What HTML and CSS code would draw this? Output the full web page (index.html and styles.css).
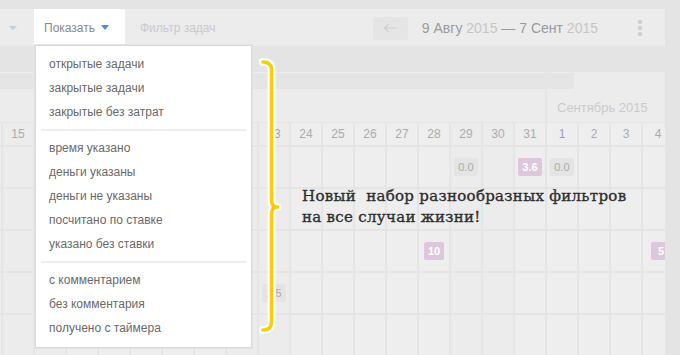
FILE: index.html
```html
<!DOCTYPE html>
<html lang="ru">
<head>
<meta charset="utf-8">
<title>Календарь</title>
<link rel="stylesheet" href="styles.css">
</head>
<body>
<div class="app">
  <div class="main">
    <div class="toolbar">
      <div class="tb-left"><span class="tri tri-light"></span></div>
      <div class="tab tab-active">Показать <span class="tri tri-blue"></span></div>
      <div class="filter">Фильтр задач</div>
      <button class="nav-btn" type="button">
        <svg width="14" height="10" viewBox="0 0 14 10"><path d="M13.5 5H1.5M5.5 1L1.5 5l4 4" fill="none" stroke="#cfcfcf" stroke-width="1.2"/></svg>
      </button>
      <div class="range"><span class="d">9 Авгу</span> <span class="y">2015</span> <span class="d">— 7 Сент</span> <span class="y">2015</span></div>
      <div class="more"><i></i><i></i><i></i></div>
    </div>
    <div class="band"></div>
    <div class="months">
      <div class="month month-aug"><div class="bar"></div></div>
      <div class="month month-sep"><div class="bar bar-short"></div><div class="mname">Сентябрь 2015</div></div>
    </div>
    <div class="grid">
      <div class="c"></div><div class="c">15</div><div class="c">16</div><div class="c">17</div><div class="c">18</div><div class="c">19</div><div class="c">20</div><div class="c">21</div><div class="c">22</div><div class="c">23</div><div class="c">24</div><div class="c">25</div><div class="c">26</div><div class="c">27</div><div class="c">28</div><div class="c">29</div><div class="c">30</div><div class="c">31</div><div class="c c-first">1</div><div class="c">2</div><div class="c">3</div><div class="c">4</div>

      <div class="c"></div><div class="c"></div><div class="c"></div><div class="c"></div><div class="c"></div><div class="c"></div><div class="c"></div><div class="c"></div><div class="c"></div><div class="c"></div><div class="c"></div><div class="c"></div><div class="c"></div><div class="c"></div><div class="c"></div><div class="c"><span class="badge">0.0</span></div><div class="c"></div><div class="c"><span class="badge badge-pink">3.6</span></div><div class="c"><span class="badge">0.0</span></div><div class="c"></div><div class="c"></div><div class="c"></div>

      <div class="c"></div><div class="c"></div><div class="c"></div><div class="c"></div><div class="c"></div><div class="c"></div><div class="c"></div><div class="c"></div><div class="c"></div><div class="c"></div><div class="c"></div><div class="c"></div><div class="c"></div><div class="c"></div><div class="c"></div><div class="c"></div><div class="c"></div><div class="c"></div><div class="c"></div><div class="c"></div><div class="c"></div><div class="c"></div>

      <div class="c"></div><div class="c"></div><div class="c"></div><div class="c"></div><div class="c"></div><div class="c"></div><div class="c"></div><div class="c"></div><div class="c"></div><div class="c"></div><div class="c"></div><div class="c"></div><div class="c"></div><div class="c"></div><div class="c"><span class="badge badge-pink">10</span></div><div class="c"></div><div class="c"></div><div class="c"></div><div class="c"></div><div class="c"></div><div class="c"></div><div class="c c-edge"><span class="badge badge-pink">5</span></div>

      <div class="c"></div><div class="c"></div><div class="c"></div><div class="c"></div><div class="c"></div><div class="c"></div><div class="c"></div><div class="c"></div><div class="c"></div><div class="c"><span class="badge badge-wide">1.5</span></div><div class="c"></div><div class="c"></div><div class="c"></div><div class="c"></div><div class="c"></div><div class="c"></div><div class="c"></div><div class="c"></div><div class="c"></div><div class="c"></div><div class="c"></div><div class="c"></div>

      <div class="c"></div><div class="c"></div><div class="c"></div><div class="c"></div><div class="c"></div><div class="c"></div><div class="c"></div><div class="c"></div><div class="c"></div><div class="c"></div><div class="c"></div><div class="c"></div><div class="c"></div><div class="c"></div><div class="c"></div><div class="c"></div><div class="c"></div><div class="c"></div><div class="c"></div><div class="c"></div><div class="c"></div><div class="c"></div>
    </div>
  </div>
  <div class="side"></div>
</div>

<div class="menu">
  <div class="item">открытые задачи</div>
  <div class="item">закрытые задачи</div>
  <div class="item">закрытые без затрат</div>
  <div class="sep"></div>
  <div class="item">время указано</div>
  <div class="item">деньги указаны</div>
  <div class="item">деньги не указаны</div>
  <div class="item">посчитано по ставке</div>
  <div class="item">указано без ставки</div>
  <div class="sep"></div>
  <div class="item">с комментарием</div>
  <div class="item">без комментария</div>
  <div class="item">получено с таймера</div>
</div>

<svg class="brace" viewBox="0 0 680 355" width="680" height="355">
  <path d="M263,62 Q271.5,62 271.5,70 L271.5,200 Q271.5,207 277.5,207 Q271.5,207 271.5,214 L271.5,322 Q271.5,330 263,330" fill="none" stroke="#ffffff" stroke-width="8" stroke-linecap="round" stroke-linejoin="round"/>
  <path d="M263,62 Q271.5,62 271.5,70 L271.5,200 Q271.5,207 277.5,207 Q271.5,207 271.5,214 L271.5,322 Q271.5,330 263,330" fill="none" stroke="#ffcc00" stroke-width="3.5" stroke-linecap="round" stroke-linejoin="round"/>
</svg>

<div class="note">Новый&nbsp; набор разнообразных фильтров<br>на все случаи жизни!</div>
</body>
</html>
```

FILE: styles.css
```css
* { box-sizing: border-box; }

html, body {
  margin: 0;
  padding: 0;
}

body {
  width: 680px;
  height: 355px;
  overflow: hidden;
  position: relative;
  background: #e4e4e4;
  font-family: "Liberation Sans", Arial, sans-serif;
}

.app {
  display: flex;
  height: 355px;
}

.main {
  width: 665px;
  padding-top: 9px;
  overflow: hidden;
}

.side {
  flex: 1;
  background: #e4e4e4;
}

/* toolbar */
.toolbar {
  height: 37px;
  background: #ececec;
  display: flex;
  align-items: center;
}

.tb-left {
  width: 34px;
  height: 100%;
  display: flex;
  align-items: center;
  padding-left: 9px;
}

.tri {
  display: inline-block;
  width: 0;
  height: 0;
  border-left: 4px solid transparent;
  border-right: 4px solid transparent;
  border-top: 4px solid #b9cfe2;
}

.tri-blue {
  border-left-width: 4.5px;
  border-right-width: 4.5px;
  border-top: 5px solid #4a8fd0;
  margin-left: 6px;
  vertical-align: 1px;
}

.tab {
  height: 100%;
  width: 91px;
  display: flex;
  align-items: center;
  padding-left: 10px;
  font-size: 12px;
  color: #8a8a8a;
}

.tab-active {
  background: #ffffff;
}

.filter {
  margin-left: 15px;
  font-size: 12px;
  color: #c9c9c9;
}

.nav-btn {
  margin-left: auto;
  width: 35px;
  height: 23px;
  border: 0;
  padding: 0;
  border-radius: 3px;
  background: #e5e5e5;
  display: flex;
  align-items: center;
  justify-content: center;
  margin-top: 1px;
}

.range {
  margin-left: 14px;
  font-size: 14px;
  white-space: nowrap;
}

.range .d { color: #9a9a9a; }
.range .y { color: #c6c6c6; }

.more {
  margin-left: 40px;
  margin-right: 23px;
  display: flex;
  flex-direction: column;
  gap: 2px;
  margin-top: 1px;
}

.more i {
  display: block;
  width: 4px;
  height: 4px;
  border-radius: 1px;
  background: #cfcfcf;
}

.band {
  height: 26px;
  background: #e4e4e4;
}

/* months header */
.months {
  display: flex;
  height: 50px;
  background: #ececec;
}

.month {
  padding-top: 1px;
}

.month-aug {
  width: 545px;
}

.month-sep {
  flex: 1;
  border-left: 2px solid #e5e5e5;
}

.bar {
  height: 16px;
  background: #e5e5e5;
}

.bar-short {
  width: 27px;
}

.mname {
  padding: 11px 0 0 10px;
  line-height: 16px;
  font-size: 13px;
  color: #cbcbcb;
  white-space: nowrap;
}

/* grid */
.grid {
  display: grid;
  grid-template-columns: 1px repeat(21, 30px);
  grid-template-rows: 22px repeat(5, 40px);
  gap: 2px;
  padding-top: 1px;
  background: #e5e5e5;
  width: 673px;
}

.c {
  background: #eeeeee;
  display: flex;
  align-items: center;
  justify-content: center;
  font-size: 12px;
  color: #ababab;
  overflow: hidden;
}

.c:nth-child(22n+2),
.c:nth-child(22n+3),
.c:nth-child(22n+9),
.c:nth-child(22n+10),
.c:nth-child(22n+16),
.c:nth-child(22n+17) {
  background: #ececec;
}

.c-first {
  color: #9a9ac8;
}

.c-edge {
  justify-content: flex-start;
  padding-left: 8px;
}

.badge {
  display: inline-block;
  height: 18px;
  line-height: 18px;
  min-width: 20px;
  padding: 0 4px;
  border-radius: 2px;
  background: #e4e4e4;
  color: #acacac;
  font-size: 11px;
  text-align: center;
  margin-top: -1px;
}

.badge-pink {
  background: #dcc7dc;
  color: #ffffff;
  font-weight: bold;
}

.badge-wide {
  width: 24px;
}

/* dropdown menu */
.menu {
  position: absolute;
  left: 35px;
  top: 45px;
  width: 217px;
  background: #ffffff;
  border: 1px solid #d9d9d9;
  box-shadow: 0 0 0 1px #e3e3e3;
  padding: 6px 0 7px;
}

.item {
  height: 24px;
  line-height: 24px;
  padding-left: 13px;
  font-size: 12px;
  color: #6a6a6a;
  white-space: nowrap;
}

.sep {
  height: 2px;
  margin: 5px 5px 5px 5px;
  background: #eeeeee;
}

/* annotation */
.brace {
  position: absolute;
  left: 0;
  top: 0;
  pointer-events: none;
}

.note {
  position: absolute;
  left: 302px;
  top: 186px;
  font-family: "DejaVu Serif", "Liberation Serif", serif;
  font-size: 15px;
  line-height: 21px;
  letter-spacing: 0.3px;
  color: #2e2e2e;
  -webkit-text-stroke: 0.35px #2e2e2e;
  white-space: nowrap;
}
```
